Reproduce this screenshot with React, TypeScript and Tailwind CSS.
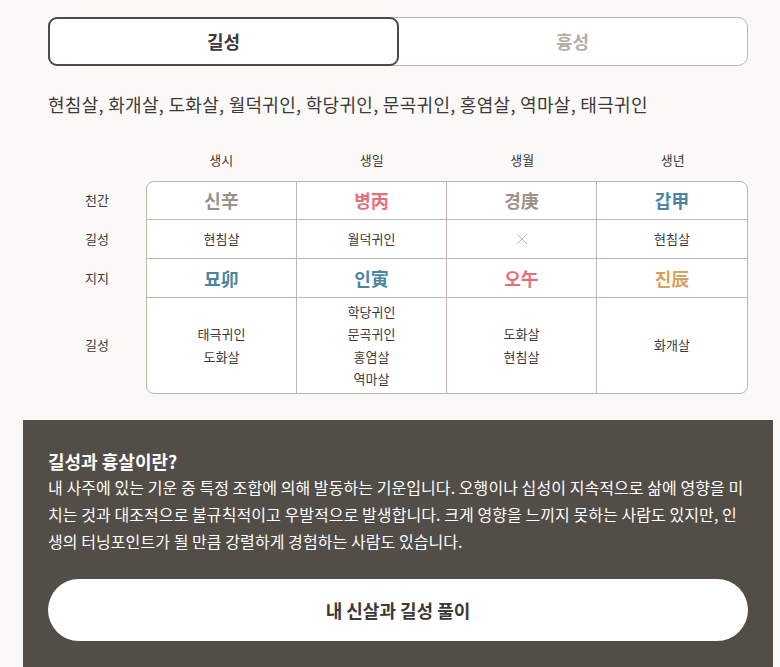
import { X } from "lucide-react";

const font = { fontFamily: '"Noto Sans CJK KR", "Noto Sans", sans-serif' };

const pillars = ["생시", "생일", "생월", "생년"];

const stems = [
  { text: "신辛", color: "text-[#9b9189]" },
  { text: "병丙", color: "text-[#e6707a]" },
  { text: "경庚", color: "text-[#9b9189]" },
  { text: "갑甲", color: "text-[#4b86a0]" },
];

const branches = [
  { text: "묘卯", color: "text-[#4b86a0]" },
  { text: "인寅", color: "text-[#4b86a0]" },
  { text: "오午", color: "text-[#e6707a]" },
  { text: "진辰", color: "text-[#d7a25f]" },
];

const stemStars = ["현침살", "월덕귀인", "", "현침살"];

const branchStars = [
  ["태극귀인", "도화살"],
  ["학당귀인", "문곡귀인", "홍염살", "역마살"],
  ["도화살", "현침살"],
  ["화개살"],
];

export default function App() {
  return (
    <div className="min-h-[667px] w-[780px] bg-[#fbf9f7] text-[#3d3935]" style={font}>
      <div className="pt-[17px] px-[48px] w-[796px]">
        {/* Tabs */}
        <div className="flex h-[49px] rounded-[10px] border border-[#bdb5ae] bg-white">
          <button className="-m-px w-[351px] rounded-[9px] border-2 border-[#4f4943] text-[18px] font-bold text-[#3d3935]">
            길성
          </button>
          <button className="flex-1 text-[18px] font-bold text-[#b5ada6]">흉성</button>
        </div>

        <p className="mt-[25px] text-[18px] leading-[27px] tracking-[0.3px] text-[#3d3935]">
          현침살, 화개살, 도화살, 월덕귀인, 학당귀인, 문곡귀인, 홍염살, 역마살, 태극귀인
        </p>

        {/* Table */}
        <div className="mt-[24px] flex">
          <div className="w-[98px] shrink-0 flex flex-col text-[13px]">
            <div className="h-[39px]" />
            <div className="h-[38px] flex items-center justify-center">천간</div>
            <div className="h-[39px] flex items-center justify-center">길성</div>
            <div className="h-[39px] flex items-center justify-center">지지</div>
            <div className="h-[96px] flex items-center justify-center">길성</div>
          </div>
          <div className="flex-1">
            <div className="grid grid-cols-4 h-[39px] text-[13px]">
              {pillars.map((p) => (
                <div key={p} className="flex items-start justify-center pt-[8px]">
                  {p}
                </div>
              ))}
            </div>
            <div className="rounded-[8px] border border-[#bdb5ae] bg-white overflow-hidden">
              <div className="grid grid-cols-4 h-[38px] border-b border-[#bdb5ae]">
                {stems.map((s, i) => (
                  <div
                    key={s.text}
                    className={`flex items-center justify-center text-[18px] font-bold ${s.color} ${i < 3 ? "border-r border-[#bdb5ae]" : ""}`}
                  >
                    {s.text}
                  </div>
                ))}
              </div>
              <div className="grid grid-cols-4 h-[39px] border-b border-[#bdb5ae] text-[13px]">
                {stemStars.map((s, i) => (
                  <div
                    key={i}
                    className={`flex items-center justify-center ${i < 3 ? "border-r border-[#bdb5ae]" : ""}`}
                  >
                    {s ? s : <X size={18} strokeWidth={1.2} className="text-[#b5ada6]" />}
                  </div>
                ))}
              </div>
              <div className="grid grid-cols-4 h-[39px] border-b border-[#bdb5ae]">
                {branches.map((s, i) => (
                  <div
                    key={s.text}
                    className={`flex items-center justify-center text-[18px] font-bold ${s.color} ${i < 3 ? "border-r border-[#bdb5ae]" : ""}`}
                  >
                    {s.text}
                  </div>
                ))}
              </div>
              <div className="grid grid-cols-4 h-[95px] text-[13px] leading-[22.5px]">
                {branchStars.map((list, i) => (
                  <div
                    key={i}
                    className={`flex flex-col items-center justify-center ${i < 3 ? "border-r border-[#bdb5ae]" : ""}`}
                  >
                    {list.map((t) => (
                      <span key={t}>{t}</span>
                    ))}
                  </div>
                ))}
              </div>
            </div>
          </div>
        </div>
      </div>

      {/* Info panel */}
      <div className="mt-[26px] ml-[23px] w-[750px] bg-[#524d47] px-[25px] pt-[28px] pb-[26px] text-white">
        <h2 className="text-[18px] font-bold leading-[26px]">길성과 흉살이란?</h2>
        <p className="text-[16px] leading-[27px] tracking-[0.07px] break-all">
          내 사주에 있는 기운 중 특정 조합에 의해 발동하는 기운입니다. 오행이나 십성이 지속적으로 삶에 영향을 미치는 것과 대조적으로 불규칙적이고 우발적으로 발생합니다. 크게 영향을 느끼지 못하는 사람도 있지만, 인생의 터닝포인트가 될 만큼 강렬하게 경험하는 사람도 있습니다.
        </p>
        <button className="mt-[24px] h-[62px] w-full rounded-full bg-white text-[18px] font-bold text-[#3d3935]">
          내 신살과 길성 풀이
        </button>
      </div>
    </div>
  );
}
